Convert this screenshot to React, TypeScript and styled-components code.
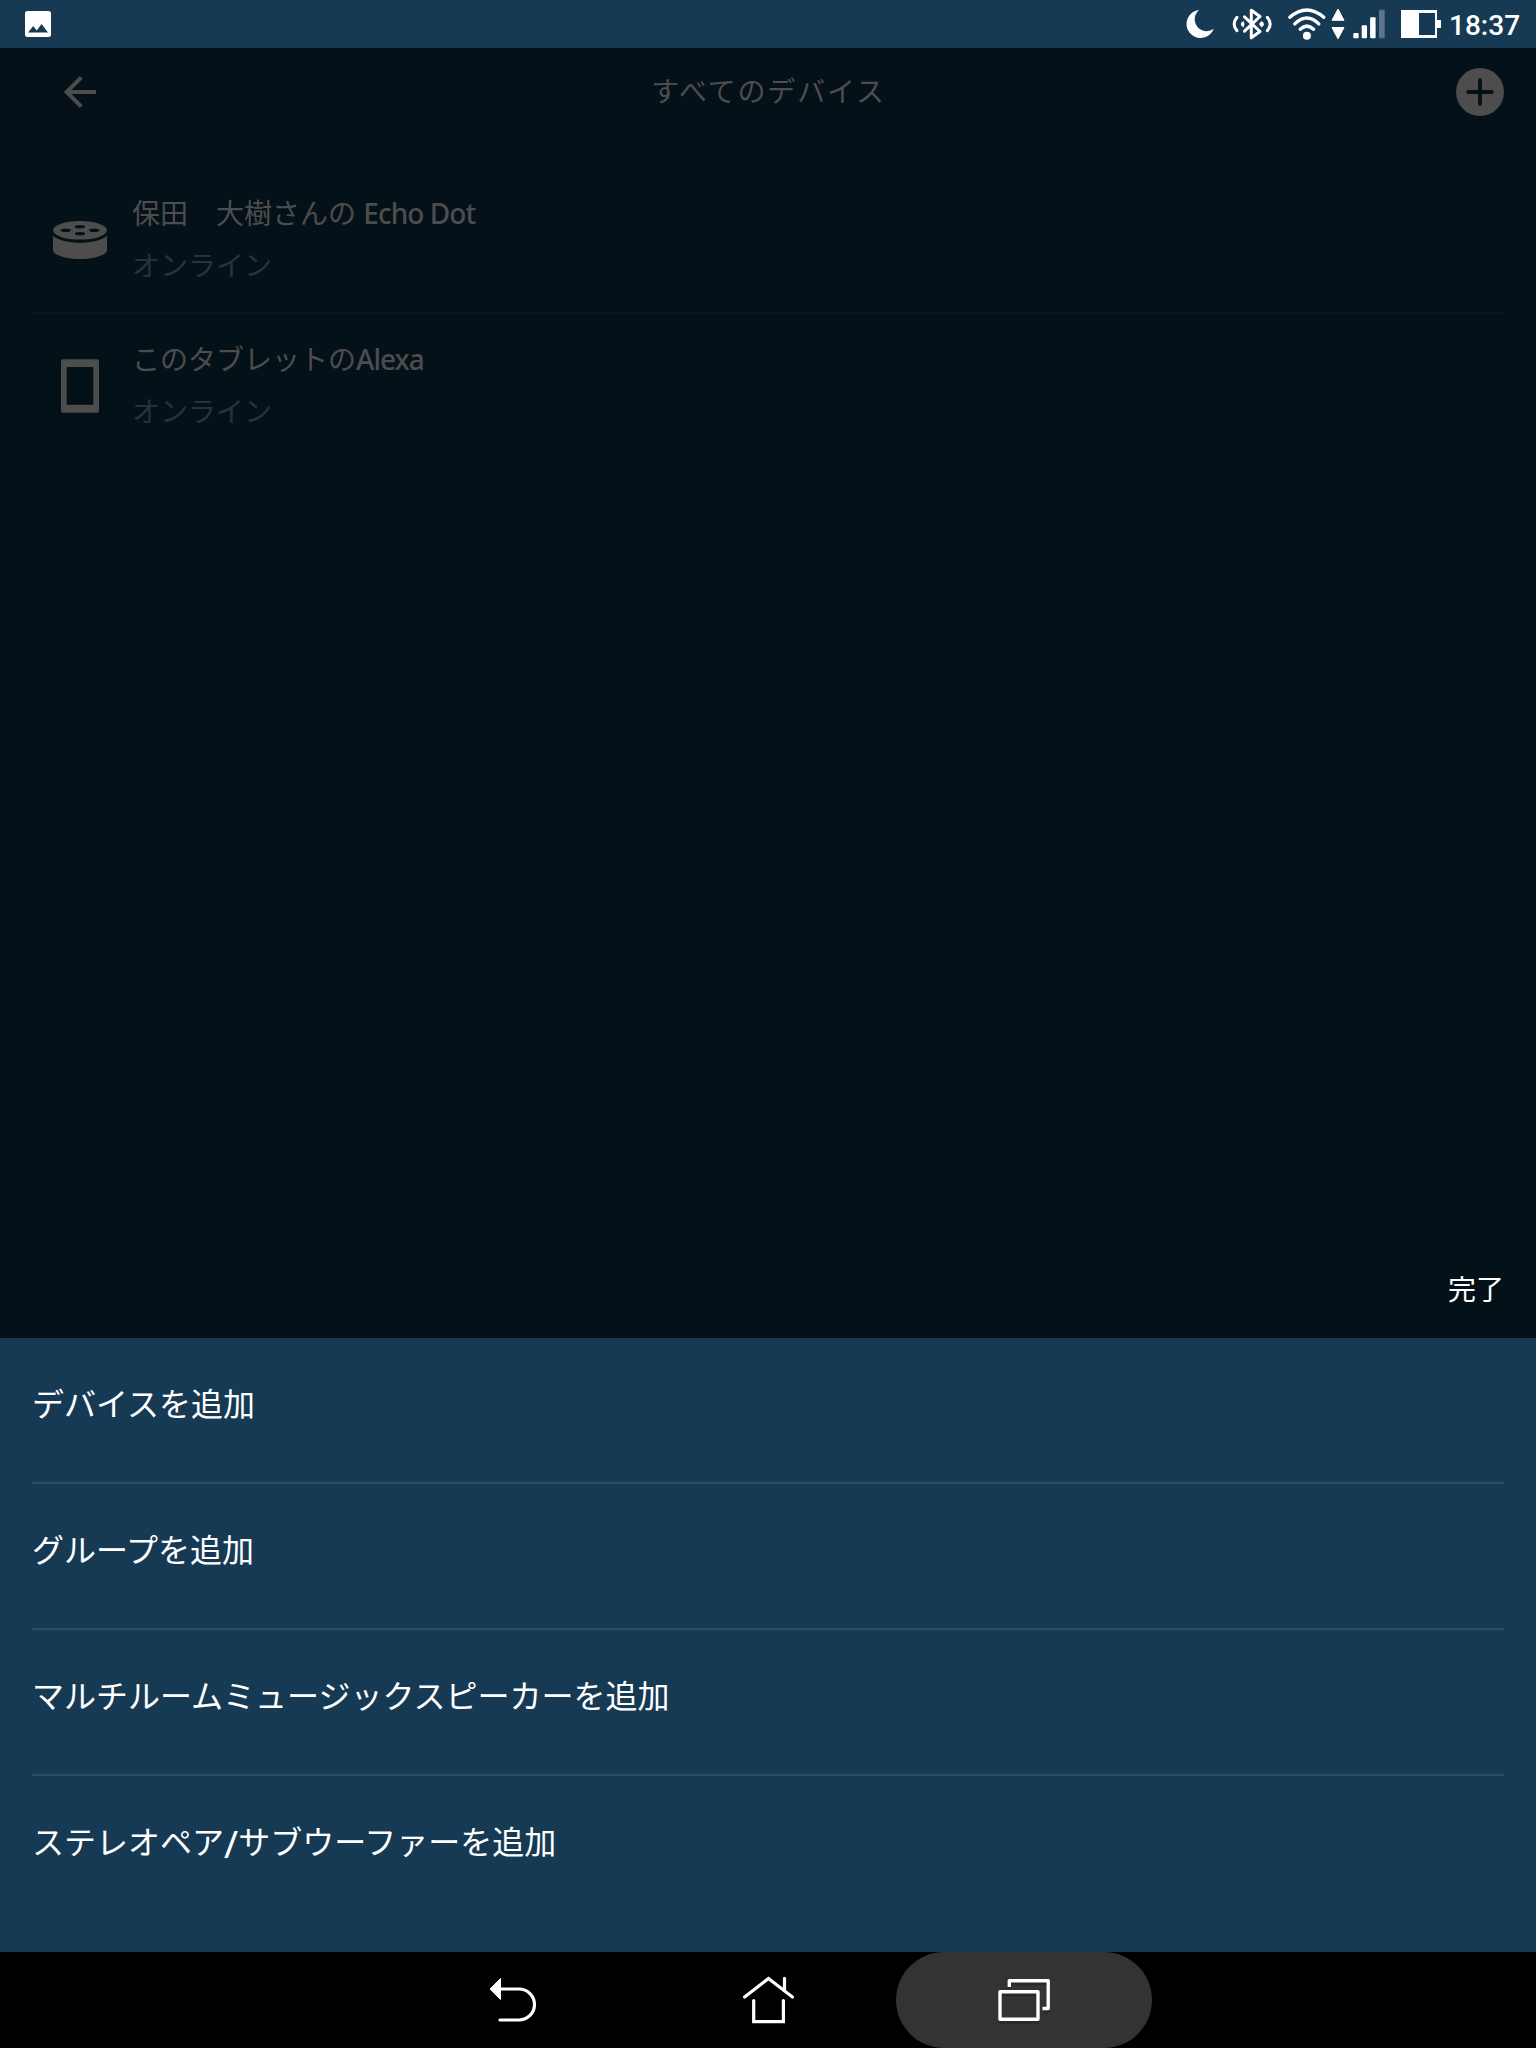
import React from "react";
import styled, { createGlobalStyle } from "styled-components";

const GlobalStyle = createGlobalStyle`
  *, *::before, *::after { box-sizing: border-box; }
  html, body { margin: 0; padding: 0; background: #000; }
  body { font-family: "Noto Sans", "Noto Sans CJK JP", sans-serif; }
`;

const Screen = styled.div`
  width: 1536px;
  height: 2048px;
  display: flex;
  flex-direction: column;
  overflow: hidden;
  background: #051119;
`;

const StatusBar = styled.header`
  height: 48px;
  flex: none;
  display: flex;
  align-items: flex-start;
  justify-content: space-between;
  padding-left: 24px;
  background: #173a54;
  color: #fff;
`;

const StatusIcons = styled.div`
  display: flex;
  height: 48px;
`;

const Clock = styled.time`
  width: 87px;
  padding-top: 2px;
  font: 500 28px/48px Roboto, sans-serif;
`;

const Glyph = styled.svg`
  display: block;
  flex: none;
`;

const Page = styled.main`
  flex: 1;
  display: flex;
  flex-direction: column;
  color: #4d4d4d;
`;

const TitleBar = styled.div`
  height: 120px;
  padding: 20px 32px 0;
  display: grid;
  grid-template-columns: 96px 1fr 96px;
  align-items: start;
`;

const IconButton = styled.button<{ $align: "start" | "end" }>`
  height: 48px;
  padding: 0;
  border: 0;
  background: none;
  color: inherit;
  display: flex;
  align-items: center;
  justify-content: flex-${(p) => p.$align};
`;

const Title = styled.h1`
  margin: 0;
  padding-left: 1px;
  text-align: center;
  font-size: 28px;
  font-weight: 400;
  line-height: 46px;
  letter-spacing: 1.8px;
`;

const DeviceList = styled.ul`
  list-style: none;
  margin: 0 32px;
  padding: 0;
  flex: 1;
`;

const DeviceRow = styled.li`
  height: 146px;
  display: flex;
  align-items: flex-start;
  border-bottom: 2px solid #0c1821;
  &:last-child { border-bottom-color: transparent; }
`;

const DeviceIcon = styled.div`
  width: 100px;
  height: 144px;
  padding-right: 4px;
  display: flex;
  align-items: center;
  justify-content: center;
`;

const DeviceText = styled.div`
  padding-top: 19px;
  font-size: 28px;
`;

const DeviceName = styled.div`
  line-height: 52px;
`;

const Latin = styled.span`
  letter-spacing: -0.95px;
  font-weight: 500;
`;

const DeviceState = styled.div`
  line-height: 52px;
  color: #24343e;
`;

const DoneRow = styled.div`
  height: 96px;
  padding: 21px 32px 0;
  display: flex;
  justify-content: flex-end;
`;

const DoneButton = styled.button`
  height: 52px;
  padding: 0;
  border: 0;
  background: none;
  color: #fff;
  font: inherit;
  font-size: 28px;
  line-height: 52px;
`;

const Sheet = styled.ul`
  height: 614px;
  flex: none;
  margin: 0;
  padding: 0 32px;
  list-style: none;
  background: #173a54;
`;

const SheetItem = styled.li`
  height: 146px;
  padding-top: 42px;
  border-bottom: 2px solid #2b4c65;
  color: #fff;
  font-size: 32px;
  line-height: 48px;
  &:last-child { border-bottom: 0; }
`;

const Slash = styled.span`
  font-size: 38px;
  line-height: 0;
  vertical-align: -4px;
`;

const NavBar = styled.nav`
  height: 96px;
  flex: none;
  display: flex;
  justify-content: center;
  background: #000;
`;

const NavButton = styled.button<{ $pressed?: boolean }>`
  width: 256px;
  height: 96px;
  padding: 0;
  border: 0;
  border-radius: 48px;
  display: flex;
  align-items: center;
  justify-content: center;
  background: ${(p) => (p.$pressed ? "#333" : "transparent")};
`;

const sheetActions: { id: string; label: React.ReactNode }[] = [
  { id: "device", label: "デバイスを追加" },
  { id: "group", label: "グループを追加" },
  { id: "multiroom", label: "マルチルームミュージックスピーカーを追加" },
  { id: "stereo", label: <>ステレオペア<Slash>/</Slash>サブウーファーを追加</> },
];

const PictureIcon = () => (
  <Glyph width="28" height="48" viewBox="24 0 28 48">
    <path
      fill="#fff"
      fillRule="evenodd"
      d="M27.5 11H48.5Q51 11 51 13.5V34.500Q51 37 48.500 37H27.500Q25 37 25 34.500V13.500Q25 11 27.500 11ZM28 32.600H48L41.600 24L36.700 30.400L33.300 26Z"
    />
  </Glyph>
);

const MoonIcon = () => (
  <Glyph width="56" height="48" viewBox="4 0 56 48">
    <path fill="#fff" d="M29.300 10A14 14 0 1 0 43.700 28.700A11.800 11.800 0 0 1 29.300 10Z" />
  </Glyph>
);

const BluetoothIcon = () => (
  <Glyph width="54" height="48" viewBox="60 0 54 48" fill="none" stroke="#fff" strokeWidth="3">
    <path d="M74.500 16.800L90 31.500L81.300 37.800V10.200L90 16.500L74.500 31.200" strokeLinejoin="round" strokeLinecap="round" />
    <path d="M67 17.300Q61.300 24 67 30.700M97.300 17.300Q103 24 97.300 30.700" strokeLinecap="round" />
    <path d="M73.500 21Q68 24 73.500 27.500L74.500 24ZM91.500 21L89 24L91.500 27.500Q96.500 24 91.500 21Z" fill="#fff" stroke="none" />
  </Glyph>
);

const WifiIcon = () => (
  <Glyph width="66" height="48" viewBox="114 0 66 48">
    <g fill="none" stroke="#fff" strokeWidth="3.400" strokeLinecap="round">
      <path d="M119.800 17.200Q136.800 2.600 153.800 17.200" />
      <path d="M124.800 23.900Q136.800 12.200 148.800 23.900" />
      <path d="M130.200 29.200Q136.800 23 143.600 29.200" />
    </g>
    <circle cx="136.900" cy="35.800" r="4" fill="#fff" />
    <path fill="#fff" stroke="#fff" strokeWidth="1" strokeLinejoin="round" d="M168 9L174 20.300H162ZM162 27.500H174L168 38.800Z" />
  </Glyph>
);

const SignalIcon = () => (
  <Glyph width="46" height="48" viewBox="180 0 46 48" fill="#fff">
    <rect x="183.300" y="33" width="5.300" height="5.300" rx="1" />
    <rect x="191.700" y="25.300" width="5.300" height="13" rx="1" />
    <rect x="200.100" y="17.300" width="5.500" height="21" rx="1" />
    <rect x="209" y="9.700" width="5.700" height="28.600" rx="1" opacity="0.300" />
  </Glyph>
);

const BatteryIcon = () => (
  <Glyph width="53" height="48" viewBox="226 0 53 48">
    <path fill="#fff" fillRule="evenodd" d="M231 10H267V20H271V28H267V38H231ZM249 13V35H265V13Z" />
  </Glyph>
);

const BackArrowIcon = () => (
  <Glyph width="64" height="48" viewBox="32 68 64 48" fill="none" stroke="currentColor" strokeWidth="4">
    <path d="M96 92H67M81.300 77.400L66.700 92L81.300 106.600" />
  </Glyph>
);

const AddIcon = () => (
  <Glyph width="48" height="48" viewBox="0 0 48 48">
    <circle cx="24" cy="24" r="24" fill="currentColor" />
    <path d="M12.300 24H35.700M24 12.300V35.700" stroke="#051119" strokeWidth="4" strokeLinecap="round" />
  </Glyph>
);

const EchoDotIcon = () => (
  <Glyph width="54" height="38" viewBox="53 221 54 38" fill="currentColor">
    <path
      fillRule="evenodd"
      d="M53 230.300a27 9.300 0 1 0 54 0a27 9.300 0 1 0-54 0ZM60.500 230.300a5.200 1.800 0 1 1 10.400 0a5.200 1.800 0 1 1-10.400 0ZM89 230.300a5.200 1.800 0 1 1 10.400 0a5.200 1.800 0 1 1-10.400 0ZM74.800 226.700a5.200 1.700 0 1 1 10.400 0a5.200 1.700 0 1 1-10.400 0ZM74.800 233.700a5.200 1.700 0 1 1 10.400 0a5.200 1.700 0 1 1-10.400 0Z"
    />
    <path d="M53 235.700C58 240.500 69 242.700 80 242.700S102 240.500 107 235.700V250C107 255.500 93 259 80 259S53 255.500 53 250Z" />
  </Glyph>
);

const TabletIcon = () => (
  <Glyph width="38" height="54" viewBox="0 0 38 54">
    <path
      fill="currentColor"
      fillRule="evenodd"
      d="M2 0.300H36Q38 0.300 38 2.300V51.700Q38 53.700 36 53.700H2Q0 53.700 0 51.700V2.300Q0 0.300 2 0.300ZM5.700 8V45.700H32.300V8Z"
    />
  </Glyph>
);

const NavBackIcon = () => (
  <Glyph width="64" height="96" viewBox="480 1952 64 96">
    <path d="M498 1989H519A15.500 15.500 0 0 1 519 2020H500" fill="none" stroke="#fff" strokeWidth="3.200" strokeLinecap="round" />
    <path d="M490 1989L500.500 1978.500V1999.500Z" fill="#fff" stroke="#fff" strokeLinejoin="round" />
  </Glyph>
);

const NavHomeIcon = () => (
  <Glyph width="64" height="96" viewBox="736 1952 64 96" fill="none" stroke="#fff" strokeWidth="3.200" strokeLinecap="round">
    <path d="M744.600 1997L768.500 1978.500L792.400 1997M784.500 1978.400V1990" />
    <path d="M753.700 2000.500V2021.700H783.400V2000.500" />
  </Glyph>
);

const NavRecentsIcon = () => (
  <Glyph width="64" height="96" viewBox="992 1952 64 96" fill="none" strokeWidth="3.400" strokeLinejoin="round">
    <path stroke="#292929" d="M1000 1994.500H1038V2022H1000ZM1009.300 1988V1983.500H1048V2011.500H1043" />
    <path stroke="#fff" d="M1000 1991.700H1038V2019.200H1000ZM1009.300 1987V1980.800H1048.200V2008.500H1042.500" />
  </Glyph>
);

export default function App() {
  return (
    <>
      <GlobalStyle />
      <Screen>
        <StatusBar>
          <PictureIcon />
          <StatusIcons>
            <MoonIcon />
            <BluetoothIcon />
            <WifiIcon />
            <SignalIcon />
            <BatteryIcon />
            <Clock>18:37</Clock>
          </StatusIcons>
        </StatusBar>
        <Page lang="ja">
          <TitleBar>
            <IconButton $align="start" aria-label="戻る"><BackArrowIcon /></IconButton>
            <Title>すべてのデバイス</Title>
            <IconButton $align="end" aria-label="追加"><AddIcon /></IconButton>
          </TitleBar>
          <DeviceList>
            <DeviceRow>
              <DeviceIcon><EchoDotIcon /></DeviceIcon>
              <DeviceText>
                <DeviceName>保田　大樹さんの <Latin>Echo Dot</Latin></DeviceName>
                <DeviceState>オンライン</DeviceState>
              </DeviceText>
            </DeviceRow>
            <DeviceRow>
              <DeviceIcon><TabletIcon /></DeviceIcon>
              <DeviceText>
                <DeviceName>このタブレットの<Latin>Alexa</Latin></DeviceName>
                <DeviceState>オンライン</DeviceState>
              </DeviceText>
            </DeviceRow>
          </DeviceList>
          <DoneRow><DoneButton>完了</DoneButton></DoneRow>
        </Page>
        <Sheet lang="ja">
          {sheetActions.map(({ id, label }) => (
            <SheetItem key={id}>{label}</SheetItem>
          ))}
        </Sheet>
        <NavBar>
          <NavButton aria-label="戻る"><NavBackIcon /></NavButton>
          <NavButton aria-label="ホーム"><NavHomeIcon /></NavButton>
          <NavButton $pressed aria-label="履歴"><NavRecentsIcon /></NavButton>
        </NavBar>
      </Screen>
    </>
  );
}
